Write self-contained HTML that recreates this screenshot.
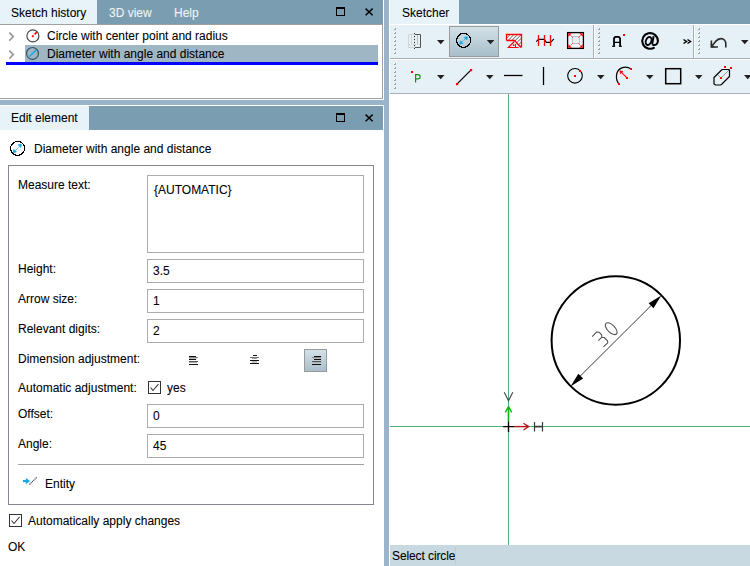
<!DOCTYPE html>
<html><head><meta charset="utf-8">
<style>
*{margin:0;padding:0;box-sizing:border-box}
html,body{width:750px;height:566px;overflow:hidden;background:#fff;font-family:"Liberation Sans",sans-serif;font-size:12px;color:#000}
.a,.lbl{-webkit-text-stroke:0.08px currentColor}
.a{position:absolute;white-space:nowrap}
.hdr{background:#7b9db2}
.tab{background:#e8f2f9}
.inp{position:absolute;border:1px solid #acacac;background:#fff}
.lbl{position:absolute;white-space:nowrap;left:18px}
</style></head><body>
<!-- LEFT PANE -->
<div class="a hdr" style="left:0;top:0;width:383px;height:24px"></div>
<div class="a tab" style="left:0;top:0;width:97px;height:24px"></div>
<div class="a" style="left:11px;top:6px;color:#000">Sketch history</div>
<div class="a" style="left:109px;top:6px;color:#eef4f8">3D view</div>
<div class="a" style="left:174px;top:6px;color:#eef4f8">Help</div>
<!-- maximize / close -->
<div class="a" style="left:336px;top:7px;width:9px;height:9px;border:1.3px solid #000;border-top-width:2px"></div>
<svg class="a" style="left:365px;top:8px" width="9" height="8"><path d="M0.6 0.6L7.6 7.2M7.6 0.6L0.6 7.2" stroke="#000" stroke-width="1.5"/></svg>
<div class="a" style="left:0;top:24px;width:383px;height:1px;background:#a0a0a0"></div>
<div class="a" style="left:382px;top:24px;width:1px;height:75px;background:#a0a0a0"></div>
<div class="a" style="left:0;top:98px;width:383px;height:1px;background:#a0a0a0"></div>
<!-- list rows -->
<div class="a" style="left:25px;top:45px;width:353px;height:17px;background:#9fb6c4"></div>
<div class="a" style="left:6px;top:62px;width:372px;height:3px;background:#0000ff"></div>
<svg class="a" style="left:8px;top:31px" width="8" height="40"><path d="M1.3 1.6L5.3 5.6L1.3 9.6M1.3 19.6L5.3 23.6L1.3 27.6" stroke="#9a9a9a" stroke-width="1.7" fill="none"/></svg>
<svg class="a" style="left:25px;top:27px" width="16" height="36">
 <circle cx="7.9" cy="8.9" r="6" fill="none" stroke="#4a4a4a" stroke-width="1.2"/>
 <path d="M7.2 9.8L8.6 8.4M9.6 7.4L11.8 5.2" stroke="#f00" stroke-width="1.7"/>
 <circle cx="7.5" cy="26.4" r="5.9" fill="none" stroke="#3a5260" stroke-width="1.2"/>
 <path d="M4.4 29.5L11.2 23" stroke="#1aa8e8" stroke-width="1.6"/>
</svg>
<div class="a" style="left:47px;top:29px">Circle with center point and radius</div>
<div class="a" style="left:47px;top:47px">Diameter with angle and distance</div>
<!-- splitter horizontal -->
<div class="a" style="left:0;top:100px;width:384px;height:5px;background:#9ab5cb"></div>
<!-- edit element header -->
<div class="a hdr" style="left:0;top:106px;width:383px;height:24px"></div>
<div class="a tab" style="left:0;top:106px;width:89px;height:24px"></div>
<div class="a" style="left:11px;top:111px">Edit element</div>
<div class="a" style="left:336px;top:113px;width:9px;height:9px;border:1.3px solid #000;border-top-width:2px"></div>
<svg class="a" style="left:365px;top:114px" width="9" height="8"><path d="M0.6 0.6L7.6 7.2M7.6 0.6L0.6 7.2" stroke="#000" stroke-width="1.5"/></svg>
<!-- element title -->
<svg class="a" style="left:9px;top:140px" width="17" height="17">
 <circle cx="8.6" cy="8.4" r="7" fill="none" stroke="#000" stroke-width="1.1" shape-rendering="crispEdges"/>
 <path d="M6 11L11 6" stroke="#14a8e8" stroke-width="1" stroke-dasharray="1 0.7"/>
 <path d="M4.2 12.6L4.8 9.4L7.4 12Z M12.4 4.2L9.2 4.8L11.8 7.4Z" fill="#14a8e8" stroke="#14a8e8" stroke-width="0.8"/>
</svg>
<div class="a" style="left:34px;top:142px">Diameter with angle and distance</div>
<!-- group box -->
<div class="a" style="left:8px;top:165px;width:366px;height:340px;border:1px solid #828790"></div>
<div class="lbl" style="top:178px">Measure text:</div>
<div class="inp" style="left:147px;top:175px;width:217px;height:78px"></div>
<div class="a" style="left:154px;top:183px">{AUTOMATIC}</div>
<div class="lbl" style="top:262px">Height:</div>
<div class="inp" style="left:147px;top:259px;width:217px;height:24px"></div>
<div class="a" style="left:153px;top:264px">3.5</div>
<div class="lbl" style="top:292px">Arrow size:</div>
<div class="inp" style="left:147px;top:289px;width:217px;height:24px"></div>
<div class="a" style="left:153px;top:294px">1</div>
<div class="lbl" style="top:322px">Relevant digits:</div>
<div class="inp" style="left:147px;top:319px;width:217px;height:24px"></div>
<div class="a" style="left:153px;top:324px">2</div>
<div class="lbl" style="top:352px">Dimension adjustment:</div>
<div class="a" style="left:304px;top:349px;width:23px;height:23px;border:1px solid #9a9a9a;background:linear-gradient(#d3e0e7,#a8bfcb)"></div>
<svg class="a" style="left:0;top:0" width="383" height="566" shape-rendering="crispEdges"><rect x="189" y="356" width="7" height="1" fill="#111"/><rect x="189" y="357" width="9" height="1" fill="#888"/><rect x="189" y="358" width="8" height="1" fill="#bbb"/><rect x="189" y="359" width="7" height="1" fill="#111"/><rect x="189" y="361" width="9" height="1" fill="#555"/><rect x="189" y="362" width="8" height="1" fill="#aaa"/><rect x="189" y="364" width="9" height="1" fill="#111"/><rect x="253" y="355" width="4" height="1" fill="#111"/><rect x="250" y="357" width="9" height="1" fill="#777"/><rect x="252" y="358" width="5" height="1" fill="#999"/><rect x="250" y="360" width="9" height="1" fill="#111"/><rect x="252" y="361" width="5" height="1" fill="#bbb"/><rect x="252" y="362" width="5" height="1" fill="#ccc"/><rect x="250" y="363" width="9" height="1" fill="#111"/><rect x="314" y="356" width="7" height="1" fill="#111"/><rect x="312" y="357" width="9" height="1" fill="#888"/><rect x="313" y="358" width="8" height="1" fill="#bbb"/><rect x="314" y="359" width="7" height="1" fill="#111"/><rect x="312" y="361" width="9" height="1" fill="#555"/><rect x="313" y="362" width="8" height="1" fill="#aaa"/><rect x="312" y="364" width="9" height="1" fill="#111"/></svg>
<div class="lbl" style="top:381px">Automatic adjustment:</div>
<div class="a" style="left:148px;top:381px;width:13px;height:13px;border:1px solid #333"></div>
<svg class="a" style="left:148px;top:381px" width="13" height="13"><path d="M2.5 6.5L5 9.5L10.5 3" stroke="#333" stroke-width="1.1" fill="none"/></svg>
<div class="a" style="left:167px;top:381px">yes</div>
<div class="lbl" style="top:407px">Offset:</div>
<div class="inp" style="left:147px;top:404px;width:217px;height:24px"></div>
<div class="a" style="left:153px;top:409px">0</div>
<div class="lbl" style="top:437px">Angle:</div>
<div class="inp" style="left:147px;top:434px;width:217px;height:24px"></div>
<div class="a" style="left:153px;top:439px">45</div>
<div class="a" style="left:18px;top:464px;width:346px;height:1px;background:#a0a0a0"></div>
<svg class="a" style="left:18px;top:472px" width="24" height="20">
 <path d="M4.9 9.1H8.5" stroke="#14a8e8" stroke-width="2.2"/><path d="M7.8 6L12.2 9.1L7.8 12.2Z" fill="#14a8e8"/>
 <path d="M11.5 12.5L18.7 5.3" stroke="#333" stroke-width="1.1" stroke-dasharray="1.2 0.6"/>
</svg>
<div class="a" style="left:45px;top:477px">Entity</div>
<!-- auto apply -->
<div class="a" style="left:9px;top:514px;width:13px;height:13px;border:1px solid #333"></div>
<svg class="a" style="left:9px;top:514px" width="13" height="13"><path d="M2.5 6.5L5 9.5L10.5 3" stroke="#333" stroke-width="1.1" fill="none"/></svg>
<div class="a" style="left:28px;top:514px">Automatically apply changes</div>
<div class="a" style="left:8px;top:540px">OK</div>
<!-- vertical splitter -->
<div class="a" style="left:384px;top:0;width:5px;height:566px;background:#9ab5cb"></div>

<!-- RIGHT PANE -->
<div class="a hdr" style="left:390px;top:0;width:360px;height:24px"></div>
<div class="a tab" style="left:390px;top:0;width:69px;height:24px"></div>
<div class="a" style="left:402px;top:6px">Sketcher</div>
<div class="a" style="left:390px;top:24px;width:360px;height:1px;background:#fff"></div>
<div class="a" style="left:390px;top:25px;width:360px;height:33px;background:#e6f0f7"></div>
<div class="a" style="left:390px;top:58px;width:360px;height:1px;background:#a7b0b6"></div>
<div class="a" style="left:390px;top:59px;width:360px;height:1px;background:#fff"></div>
<div class="a" style="left:390px;top:60px;width:360px;height:33px;background:#e6f0f7"></div>
<div class="a" style="left:390px;top:93px;width:360px;height:1px;background:#a7b0b6"></div>
<div class="a" style="left:449px;top:26px;width:50px;height:31px;border:1px solid #9a9a9a;background:linear-gradient(#d3e0e7,#a8bfcb)"></div>
<svg class="a" style="left:389px;top:24px" width="361" height="70" viewBox="389 24 361 70">
<rect x="394" y="28" width="2" height="2" fill="#9ea4a9"/><rect x="394" y="28" width="1" height="1" fill="#fff"/><rect x="394" y="32" width="2" height="2" fill="#9ea4a9"/><rect x="394" y="32" width="1" height="1" fill="#fff"/><rect x="394" y="36" width="2" height="2" fill="#9ea4a9"/><rect x="394" y="36" width="1" height="1" fill="#fff"/><rect x="394" y="40" width="2" height="2" fill="#9ea4a9"/><rect x="394" y="40" width="1" height="1" fill="#fff"/><rect x="394" y="44" width="2" height="2" fill="#9ea4a9"/><rect x="394" y="44" width="1" height="1" fill="#fff"/><rect x="394" y="48" width="2" height="2" fill="#9ea4a9"/><rect x="394" y="48" width="1" height="1" fill="#fff"/><rect x="394" y="52" width="2" height="2" fill="#9ea4a9"/><rect x="394" y="52" width="1" height="1" fill="#fff"/><rect x="598" y="28" width="2" height="2" fill="#9ea4a9"/><rect x="598" y="28" width="1" height="1" fill="#fff"/><rect x="598" y="32" width="2" height="2" fill="#9ea4a9"/><rect x="598" y="32" width="1" height="1" fill="#fff"/><rect x="598" y="36" width="2" height="2" fill="#9ea4a9"/><rect x="598" y="36" width="1" height="1" fill="#fff"/><rect x="598" y="40" width="2" height="2" fill="#9ea4a9"/><rect x="598" y="40" width="1" height="1" fill="#fff"/><rect x="598" y="44" width="2" height="2" fill="#9ea4a9"/><rect x="598" y="44" width="1" height="1" fill="#fff"/><rect x="598" y="48" width="2" height="2" fill="#9ea4a9"/><rect x="598" y="48" width="1" height="1" fill="#fff"/><rect x="598" y="52" width="2" height="2" fill="#9ea4a9"/><rect x="598" y="52" width="1" height="1" fill="#fff"/><rect x="698" y="28" width="2" height="2" fill="#9ea4a9"/><rect x="698" y="28" width="1" height="1" fill="#fff"/><rect x="698" y="32" width="2" height="2" fill="#9ea4a9"/><rect x="698" y="32" width="1" height="1" fill="#fff"/><rect x="698" y="36" width="2" height="2" fill="#9ea4a9"/><rect x="698" y="36" width="1" height="1" fill="#fff"/><rect x="698" y="40" width="2" height="2" fill="#9ea4a9"/><rect x="698" y="40" width="1" height="1" fill="#fff"/><rect x="698" y="44" width="2" height="2" fill="#9ea4a9"/><rect x="698" y="44" width="1" height="1" fill="#fff"/><rect x="698" y="48" width="2" height="2" fill="#9ea4a9"/><rect x="698" y="48" width="1" height="1" fill="#fff"/><rect x="698" y="52" width="2" height="2" fill="#9ea4a9"/><rect x="698" y="52" width="1" height="1" fill="#fff"/><rect x="394" y="63" width="2" height="2" fill="#9ea4a9"/><rect x="394" y="63" width="1" height="1" fill="#fff"/><rect x="394" y="67" width="2" height="2" fill="#9ea4a9"/><rect x="394" y="67" width="1" height="1" fill="#fff"/><rect x="394" y="71" width="2" height="2" fill="#9ea4a9"/><rect x="394" y="71" width="1" height="1" fill="#fff"/><rect x="394" y="75" width="2" height="2" fill="#9ea4a9"/><rect x="394" y="75" width="1" height="1" fill="#fff"/><rect x="394" y="79" width="2" height="2" fill="#9ea4a9"/><rect x="394" y="79" width="1" height="1" fill="#fff"/><rect x="394" y="83" width="2" height="2" fill="#9ea4a9"/><rect x="394" y="83" width="1" height="1" fill="#fff"/><rect x="394" y="87" width="2" height="2" fill="#9ea4a9"/><rect x="394" y="87" width="1" height="1" fill="#fff"/>
<rect x="593" y="25" width="1" height="33" fill="#a7b0b6"/><rect x="594" y="25" width="1" height="33" fill="#fff"/>
<rect x="693" y="25" width="1" height="33" fill="#a7b0b6"/><rect x="694" y="25" width="1" height="33" fill="#fff"/>
<!-- dropdown arrows -->
<g fill="#222"><path d="M437 40H444.5L440.75 44.2Z"/><path d="M486.8 40H494.3L490.55 44.2Z"/><path d="M741 40H748.5L744.75 44.2Z"/><path d="M437 75H444.5L440.75 79.2Z"/><path d="M486 75H493.5L489.75 79.2Z"/><path d="M597 75H604.5L600.75 79.2Z"/><path d="M646 75H653.5L649.75 79.2Z"/><path d="M695 75H702.5L698.75 79.2Z"/><path d="M744 75H751.5L747.75 79.2Z"/></g>
<!-- icon1 grayed mirror -->
<g fill="none" stroke-width="1">
<path d="M408.5 34.5H414.5V47.5H408.5Z M411.5 34.5V44.5" stroke="#d4d4d4"/>
<path d="M417.5 35V44.5" stroke="#bdbdbd"/>
<path d="M409 44.5H420" stroke="#c8c8c8" stroke-dasharray="1 1"/>
<path d="M415 34.5H420.5V47.5H415" stroke="#555"/>
<path d="M414.5 33V49" stroke="#333" stroke-dasharray="1 2"/>
</g>
<!-- circle dia -->
<circle cx="463.6" cy="40.4" r="7" fill="none" stroke="#000" stroke-width="1.2" shape-rendering="crispEdges"/>
<path d="M461.5 42.5L465.8 38.2" stroke="#14a8e8" stroke-width="1" stroke-dasharray="1 0.7"/>
<path d="M459.8 44L460.4 40.8L463 43.4Z M467.4 36.8L464.2 37.4L466.8 40Z" fill="#14a8e8" stroke="#14a8e8" stroke-width="0.8"/>
<!-- hatch icon -->
<defs><pattern id="ht" width="2.6" height="3" patternUnits="userSpaceOnUse" patternTransform="rotate(45)"><rect width="0.9" height="3" fill="#777"/></pattern></defs>
<path d="M506.5 34.5H521.5V47H520L514.5 41H506.5Z" fill="#fff"/><path d="M506.5 34.5H521.5V47H520L514.5 41H506.5Z" fill="url(#ht)"/>
<path d="M506.5 40.5V34.5H521.5V47.5 M506.5 40.5H514.5L521 47.5" fill="none" stroke="#f00" stroke-width="1.3"/><path d="M514.3 41.5L508.3 47.5H518.6M515.5 44V47.5" fill="none" stroke="#f00" stroke-width="1.1"/>
<circle cx="513.6" cy="45.2" r="0.9" fill="#f00"/>
<!-- H/H icon -->
<path d="M536.2 41.6L538.5 39.4H544.4L546.3 42.4H550.5L553.9 38.9" fill="none" stroke="#000" stroke-width="1.1"/>
<path d="M538.5 35V46 M544.5 35V46 M550.5 35V46" stroke="#f00" stroke-width="1.3"/>
<!-- square icon -->
<rect x="567.6" y="32.6" width="15.8" height="15.8" fill="#eef5f8" stroke="#000" stroke-width="1.3"/>
<rect x="572.5" y="36.5" width="7" height="7" fill="#e8eff2" stroke="#bdbdbd" stroke-width="0.9"/>
<path d="M568.3 33.3H571.8L568.3 36.8Z M582.7 33.3H579.2L582.7 36.8Z M568.3 47.7H571.8L568.3 44.2Z M582.7 47.7H579.2L582.7 44.2Z" fill="#f00"/>
<path d="M569.5 34.5L572.5 37.5 M581.5 34.5L578.5 37.5 M569.5 46.5L572.5 43.5 M581.5 46.5L578.5 43.5" stroke="#f00" stroke-width="1" stroke-dasharray="1.1 0.7"/>
<!-- A icon -->
<path d="M614 46.6V38.4L615.2 36.8H618.8L620.1 38.4V46.6" fill="none" stroke="#000" stroke-width="1.8" stroke-linejoin="bevel"/><path d="M614 42.4H620M612 46.3H615.2M618.9 46.3H622" fill="none" stroke="#000" stroke-width="1.1"/>
<rect x="623" y="34" width="2" height="2" fill="#f00"/>
<!-- @ -->
<path d="M652.4 44.9Q657.9 45.6 657.9 40.8A7.8 7.8 0 1 0 654.6 47.3" fill="none" stroke="#000" stroke-width="2.1"/>
<ellipse cx="648.6" cy="41" rx="2.7" ry="4.1" transform="rotate(22 648.6 41)" fill="none" stroke="#000" stroke-width="1.9"/>
<path d="M653.6 36.3L652.1 44.5" fill="none" stroke="#000" stroke-width="2"/>
<!-- >> -->
<path d="M683.5 39.5L686.5 41.5L683.5 43.5 M687.5 39.5L690.5 41.5L687.5 43.5" fill="none" stroke="#000" stroke-width="1.5"/>
<!-- undo -->
<path d="M725.8 47.6V44C725.8 40.6 723.6 38.6 721 38.6C718.8 38.6 717 39.8 715.6 41.4L712 46" fill="none" stroke="#2a2a2a" stroke-width="1.6"/>
<path d="M711.4 40.4V47H717.9" fill="none" stroke="#2a2a2a" stroke-width="1.6"/>
<path d="M710.8 43.5V47.6H715Z" fill="#2a2a2a"/>
<!-- row2: point P -->
<rect x="411" y="71" width="2" height="2" fill="#f00"/>
<path d="M415.6 82.4V74.6H418A2.1 2.1 0 0 1 418 78.8H415.6" fill="none" stroke="#178c17" stroke-width="1.2"/>
<!-- line -->
<path d="M457.5 83.5L471 70" stroke="#111" stroke-width="1.1"/>
<rect x="456" y="83" width="2.2" height="2.2" fill="#f00"/><rect x="470" y="69" width="2.2" height="2.2" fill="#f00"/>
<!-- horiz / vert -->
<path d="M504 75.5H522.5" stroke="#000" stroke-width="1.3"/>
<path d="M543.5 67V85" stroke="#000" stroke-width="1.3"/>
<!-- circle -->
<circle cx="575" cy="75.8" r="7.3" fill="none" stroke="#000" stroke-width="1.1"/>
<rect x="574" y="75" width="2" height="2" fill="#f00"/><rect x="579" y="70" width="2" height="2" fill="#f00"/>
<!-- arc -->
<path d="M618.8 84C614.8 78.5 615.8 69.5 622.5 67.6C626 66.6 629 67.6 631 68.8" fill="none" stroke="#000" stroke-width="1.2"/>
<path d="M627 77.8L620.5 71.3" stroke="#f00" stroke-width="1.1"/>
<path d="M619.4 70.2L623.4 71.2L620.4 74.2Z" fill="#f00"/>
<rect x="618" y="83" width="2" height="2" fill="#f00"/><rect x="630" y="68" width="2" height="2" fill="#f00"/><rect x="626" y="77" width="2" height="2" fill="#f00"/>
<!-- rect -->
<rect x="665.7" y="68.7" width="15" height="15" fill="none" stroke="#000" stroke-width="1.5"/>
<!-- ellipse -->
<path d="M721 78L729.5 69.5M721 78L717.5 74.5" stroke="#888" stroke-width="0.8"/>
<path d="M714 77.5L721.5 70L722.5 69.5H729L729.5 70.5V76.5L721.5 84.5L720.5 85H715.5L714 84Z" fill="none" stroke="#000" stroke-width="1.2"/>
<rect x="720" y="77" width="2" height="2" fill="#f00"/><rect x="724" y="66" width="2" height="2" fill="#f00"/><rect x="730" y="67" width="2" height="2" fill="#f00"/>
</svg>
<!-- canvas -->
<div class="a" style="left:389px;top:94px;width:361px;height:451px;background:#fff"></div>
<div class="a" style="left:508px;top:94px;width:1px;height:451px;background:#45b475"></div>
<div class="a" style="left:390px;top:426px;width:360px;height:1px;background:#45b475"></div>
<svg class="a" style="left:389px;top:94px" width="361" height="451" viewBox="389 94 361 451">
<circle cx="615.8" cy="340.5" r="64.2" fill="none" stroke="#000" stroke-width="2"/>
<path d="M577 379.3L655 301.7" stroke="#222" stroke-width="0.9"/>
<path d="M570.5 386.4L578.35 373.75L583.15 378.55Z M661.3 295.5L648.65 303.35L653.45 308.15Z" fill="#000"/>
<g fill="none" stroke="#555" stroke-width="1.1" stroke-linejoin="round">
<path d="M592.2 336.6L596.5 332.1L599.1 332.2L601.7 334.9L601.7 337.4L598.3 340.7M601.7 337.4L604.2 337.5L607.6 340.9L607.7 342.9L603.4 346.9"/>
<ellipse cx="611.2" cy="328.7" rx="3.7" ry="7.5" transform="rotate(-45 611.2 328.7)"/>
</g>
<!-- origin -->
<path d="M503.2 426.6H514M508.5 421.5V432" stroke="#000" stroke-width="1.4"/>
<path d="M514 426.6H528.5" stroke="#b81414" stroke-width="1.4"/>
<path d="M523.5 423.2L528.6 426.6L523.5 430" fill="none" stroke="#b81414" stroke-width="1.3"/>
<path d="M508.5 421V407" stroke="#10b010" stroke-width="1.6"/>
<path d="M505.3 412.4L508.5 406.6L511.7 412.4" fill="none" stroke="#10b010" stroke-width="1.4"/>
<path d="M504.2 392.2L508.5 400.8L512.8 392.2" fill="none" stroke="#444" stroke-width="1.1"/>
<path d="M534.5 422V431.5M542.5 422V431.5" fill="none" stroke="#3a3a3a" stroke-width="1.2"/><path d="M534.5 426.6H542.5" stroke="#3a3a3a" stroke-width="1.7"/>
</svg>
<div class="a" style="left:390px;top:545px;width:360px;height:21px;background:#c9d9e2"></div>
<div class="a" style="left:392px;top:549px;letter-spacing:-0.1px">Select circle</div>
<div class="a" style="left:455px;top:547px;width:1px;height:17px;background:#cdc6c2"></div>
</body></html>
